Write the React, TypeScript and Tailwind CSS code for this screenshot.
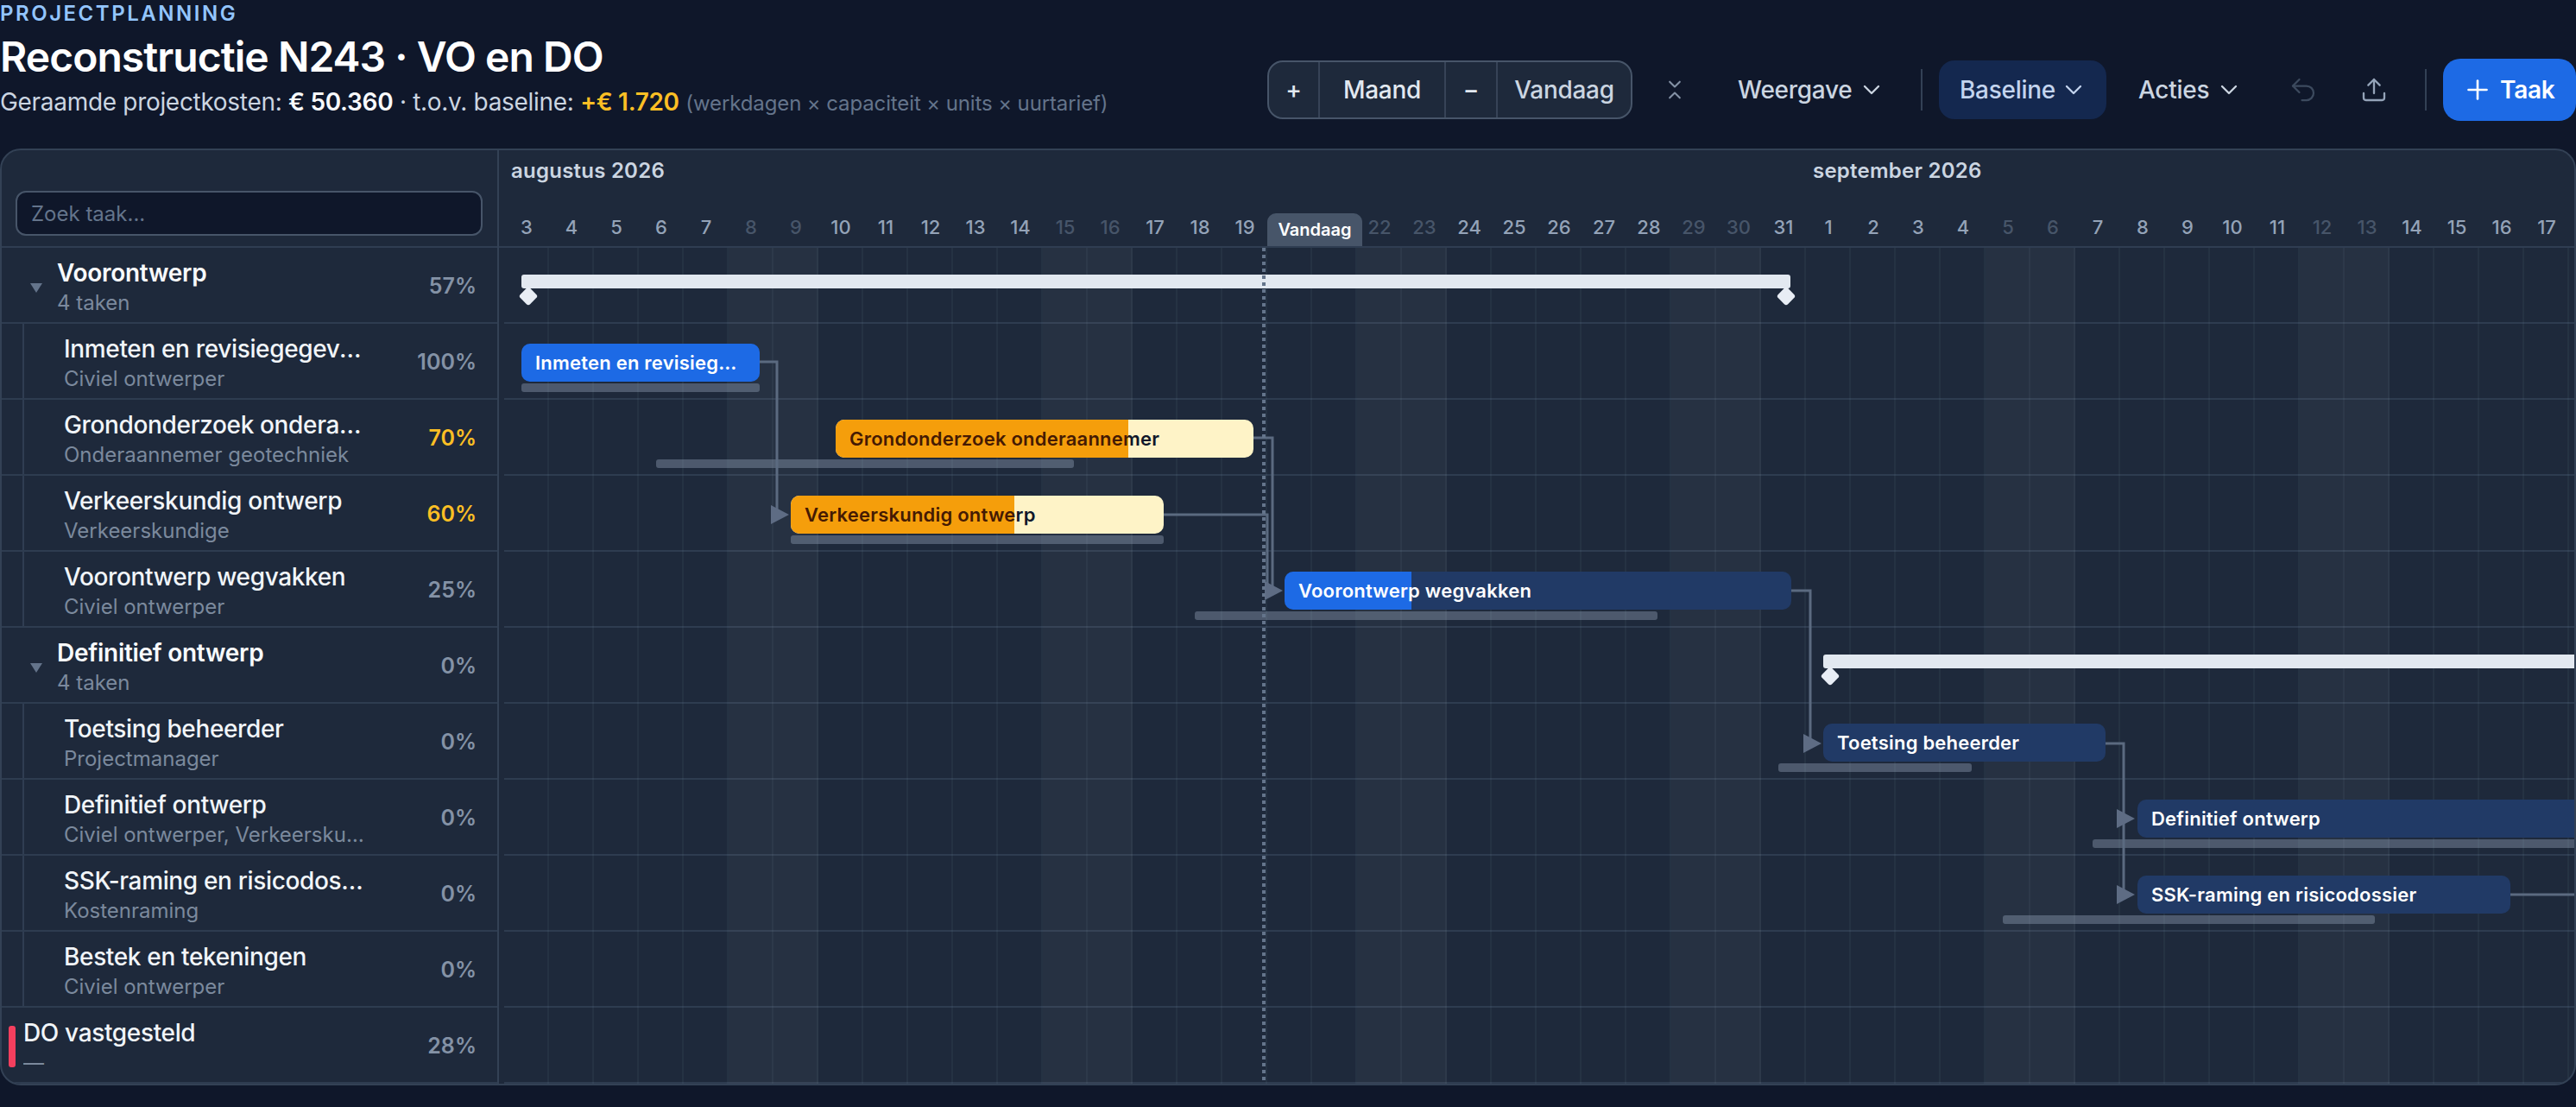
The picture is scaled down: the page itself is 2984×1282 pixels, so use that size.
import { ChevronDown, ChevronsDownUp, Plus, Undo2, Upload } from 'lucide-react';

// origin of the timeline canvas in the page
const OX = 584;
const OY = 287;

const augDays = Array.from({ length: 29 }, (_, i) => i + 3);
const sepDays = Array.from({ length: 18 }, (_, i) => i + 1);
const days = [...augDays, ...sepDays];
const isWeekend = (i: number) => i % 7 === 5 || i % 7 === 6;

const rows = [
  { type: 'group', name: 'Voorontwerp', sub: '4 taken', pct: '57%' },
  { type: 'task', name: 'Inmeten en revisiegegevens', sub: 'Civiel ontwerper', pct: '100%' },
  { type: 'task', name: 'Grondonderzoek onderaannemer', sub: 'Onderaannemer geotechniek', pct: '70%', warn: true },
  { type: 'task', name: 'Verkeerskundig ontwerp', sub: 'Verkeerskundige', pct: '60%', warn: true },
  { type: 'task', name: 'Voorontwerp wegvakken', sub: 'Civiel ontwerper', pct: '25%' },
  { type: 'group', name: 'Definitief ontwerp', sub: '4 taken', pct: '0%' },
  { type: 'task', name: 'Toetsing beheerder', sub: 'Projectmanager', pct: '0%' },
  { type: 'task', name: 'Definitief ontwerp', sub: 'Civiel ontwerper, Verkeerskundige', pct: '0%' },
  { type: 'task', name: 'SSK-raming en risicodossier', sub: 'Kostenraming', pct: '0%' },
  { type: 'task', name: 'Bestek en tekeningen', sub: 'Civiel ontwerper', pct: '0%' },
  { type: 'milestone', name: 'DO vastgesteld', sub: '—', pct: '28%' },
];

const bars = [
  { name: 'Inmeten en revisiegegevens', x1: 604, x2: 880, y: 398, pct: 100, amber: false },
  { name: 'Grondonderzoek onderaannemer', x1: 968, x2: 1452, y: 486, pct: 70, amber: true },
  { name: 'Verkeerskundig ontwerp', x1: 916, x2: 1348, y: 574, pct: 60, amber: true },
  { name: 'Voorontwerp wegvakken', x1: 1488, x2: 2075, y: 662, pct: 25, amber: false },
  { name: 'Toetsing beheerder', x1: 2112, x2: 2439, y: 838, pct: 0, amber: false },
  { name: 'Definitief ontwerp', x1: 2476, x2: 3100, y: 926, pct: 0, amber: false },
  { name: 'SSK-raming en risicodossier', x1: 2476, x2: 2908, y: 1014, pct: 0, amber: false },
];

const baselines = [
  { x1: 604, x2: 880, y: 444 },
  { x1: 760, x2: 1244, y: 532 },
  { x1: 916, x2: 1348, y: 620 },
  { x1: 1384, x2: 1920, y: 708 },
  { x1: 2060, x2: 2284, y: 884 },
  { x1: 2424, x2: 3100, y: 972 },
  { x1: 2320, x2: 2751, y: 1060 },
];

const summaries = [
  { x1: 604, x2: 2074, y: 318 },
  { x1: 2112, x2: 3100, y: 758 },
];

const diamonds = [
  { x: 612, y: 343 },
  { x: 2069, y: 343 },
  { x: 2120, y: 783 },
];

const links = [
  'M880 419H900V596',
  'M1452 507H1474V684',
  'M1348 596H1468V684',
  'M2075 684H2097V861',
  'M2439 861H2460V1036',
  'M2908 1036H2990',
];

const arrows = [
  { x: 893, y: 596 },
  { x: 1465, y: 684 },
  { x: 2089, y: 861 },
  { x: 2452, y: 948 },
  { x: 2452, y: 1036 },
];

function TaskBar({ bar }: { bar: (typeof bars)[number] }) {
  const width = bar.x2 - bar.x1;
  const labelCls = 'block truncate pr-[24px] pl-4 text-[22px] leading-[44px] font-semibold tracking-[0.01em]';
  return (
    <div
      className={`absolute h-[44px] overflow-hidden rounded-[10px] ${bar.amber ? 'bg-[#fef3c7] text-[#0f172a]' : 'bg-[#213a66] text-white'}`}
      style={{ left: bar.x1 - OX, top: bar.y - OY, width }}
    >
      <span className={labelCls}>{bar.name}</span>
      {bar.pct > 0 && (
        <div
          className={`absolute inset-y-0 left-0 overflow-hidden ${bar.amber ? 'bg-[#f59e0b] text-[#451a03]' : 'bg-[#1d6ae5] text-white'}`}
          style={{ width: (width * bar.pct) / 100 }}
        >
          <span className={labelCls} style={{ width }}>
            {bar.name}
          </span>
        </div>
      )}
    </div>
  );
}

function Row({ row }: { row: (typeof rows)[number] }) {
  const isGroup = row.type === 'group';
  const isTask = row.type === 'task';
  const isMilestone = row.type === 'milestone';
  return (
    <div className="relative flex h-[88px] items-center border-b-2 border-[#2e3c50]">
      {isTask && <div className="absolute inset-y-0 left-[24px] w-[2px] bg-[#2f3d52]" />}
      {isGroup && (
        <svg className="absolute top-[41px] left-[33px]" width="14" height="11" viewBox="0 0 14 11">
          <path d="M0 0H14L7 11Z" fill="#64748b" />
        </svg>
      )}
      {isMilestone && <div className="absolute top-[21px] left-[8px] h-[48px] w-[8px] rounded-[3px] bg-[#f43f5e]" />}
      <div className={`min-w-0 pt-[5px] ${isGroup ? 'ml-[64px] w-[400px]' : isTask ? 'ml-[72px] w-[352px]' : 'ml-[25px] w-[400px]'}`}>
        <div className={`truncate text-[28px] leading-[36px] ${isGroup ? 'tracking-[-0.01em] font-semibold text-[#f8fafc]' : 'tracking-[-0.0125em] font-medium text-[#f1f5f9]'}`}>
          {row.name}
        </div>
        <div className="truncate text-[24px] leading-[33px] text-[#7b899d]">{row.sub}</div>
      </div>
      <div className={`mr-[24px] ml-auto pt-[3px] text-[25px] font-semibold ${row.warn ? 'text-[#fbbf24]' : 'text-[#8492a6]'}`}>{row.pct}</div>
    </div>
  );
}

export default function App() {
  return (
    <div className="h-[1282px] w-[2984px] overflow-hidden bg-[#0f172a] font-['Inter',sans-serif]">
      {/* Header */}
      <header className="flex h-[172px] justify-between">
        <div className="pt-[1px]">
          <div className="text-[24px] leading-[30px] font-semibold tracking-[0.105em] text-[#93c5fd]">PROJECTPLANNING</div>
          <h1 className="mt-[7px] text-[48px] leading-[56px] font-semibold tracking-[-0.02em] text-white">Reconstructie N243 · VO en DO</h1>
          <p className="mt-[4px] text-[28px] leading-[40px] tracking-[-0.011em] text-[#cbd5e1]">
            Geraamde projectkosten: <span className="font-semibold text-[#f8fafc]">€ 50.360</span> · t.o.v. baseline:{' '}
            <span className="font-semibold text-[#fbbf24]">+€ 1.720</span>{' '}
            <span className="text-[24px] tracking-[-0.005em] text-[#64748b]">(werkdagen × capaciteit × units × uurtarief)</span>
          </p>
        </div>

        <div className="flex items-start pt-[68px] text-[28px] font-medium tracking-[-0.01em]">
          <div className="mt-[2px] flex h-[68px] w-[423px] overflow-hidden rounded-[18px] border-2 border-[#475569] bg-[#1e293b] text-[#e2e8f0]">
            <button className="w-[59px] border-r-2 border-[#374357]">+</button>
            <button className="w-[146px] border-r-2 border-[#374357]">Maand</button>
            <button className="w-[60px] border-r-2 border-[#374357]">−</button>
            <button className="flex-1 text-[#cbd5e1]">Vandaag</button>
          </div>
          <button className="mt-[2px] ml-[21px] flex h-[68px] w-[56px] items-center justify-center text-[#8492a6]">
            <ChevronsDownUp size={28} strokeWidth={1.75} />
          </button>
          <button className="mt-[2px] ml-[21px] flex h-[68px] w-[217px] items-center gap-[7px] pl-[24px] text-[#cbd5e1]">
            Weergave <ChevronDown size={32} strokeWidth={1.75} />
          </button>
          <div className="mt-[12px] ml-[19px] h-[48px] w-[2px] bg-[#334155]" />
          <button className="mt-[2px] ml-[19px] flex h-[68px] w-[194px] items-center gap-[5px] rounded-[18px] bg-[#14284f] pl-[24px] text-[#c3d4ee]">
            Baseline <ChevronDown size={32} strokeWidth={1.75} />
          </button>
          <button className="mt-[2px] ml-[13px] flex h-[68px] w-[169px] items-center gap-[7px] pl-[24px] text-[#cbd5e1]">
            Acties <ChevronDown size={32} strokeWidth={1.75} />
          </button>
          <button className="mt-[2px] ml-[18px] flex h-[68px] w-[56px] items-center justify-center text-[#3c4a5e]">
            <Undo2 size={36} strokeWidth={1.5} />
          </button>
          <button className="mt-[2px] ml-[26px] flex h-[68px] w-[56px] items-center justify-center text-[#94a3b8]">
            <Upload size={32} strokeWidth={1.75} />
          </button>
          <div className="mt-[12px] ml-[31px] h-[48px] w-[2px] bg-[#334155]" />
          <button className="ml-[19px] flex h-[72px] w-[154px] items-center gap-[8px] rounded-[20px] bg-[#1d6ae5] pl-[22px] font-semibold text-white">
            <Plus size={36} strokeWidth={1.75} /> Taak
          </button>
        </div>
      </header>

      {/* Gantt panel */}
      <div className="flex h-[1085px] overflow-hidden rounded-[24px] border-2 border-[#334155] bg-[#1e293b]">
        {/* Task list */}
        <div className="w-[576px] shrink-0 border-r-2 border-[#334155]">
          <div className="flex h-[113px] items-end border-b-2 border-[#2f3d52] px-[16px] pb-[12px]">
            <input
              placeholder="Zoek taak..."
              className="h-[52px] w-[541px] rounded-[12px] border-2 border-[#475569] bg-[#0f172a] px-[16px] text-[24px] outline-none placeholder:text-[#64748b]"
            />
          </div>
          {rows.map((row) => (
            <Row key={row.name + row.type} row={row} />
          ))}
        </div>

        {/* Timeline */}
        <div className="min-w-0 flex-1 overflow-hidden">
          <div className="h-[113px] border-b-2 border-[#2f3d52] pl-[6px]">
            <div className="flex h-[48px] items-center text-[24px] font-semibold tracking-[0.01em] text-[#cbd5e1]">
              <div className="w-[1508px] shrink-0 pl-[8px]">augustus 2026</div>
              <div className="shrink-0 pl-[8px] whitespace-nowrap">september 2026</div>
            </div>
            <div className="flex h-[63px] items-end pb-[10px] text-[22px] leading-[24px] font-medium">
              {days.map((d, i) => {
                if (i === 17) {
                  return (
                    <div key={i} className="relative w-[104px] shrink-0">
                      <div className="absolute -bottom-[10px] left-0 flex h-[38px] w-[110px] items-center justify-center rounded-t-[10px] bg-[#475569] text-[20px] font-semibold text-white">
                        Vandaag
                      </div>
                    </div>
                  );
                }
                if (i === 18) return null;
                return (
                  <div key={i} className={`w-[52px] shrink-0 text-center ${isWeekend(i) ? 'text-[#475569]' : 'text-[#94a3b8]'}`}>
                    {d}
                  </div>
                );
              })}
            </div>
          </div>

          <div className="relative h-[968px] pl-[6px]">
            {/* Grid rows */}
            {rows.map((row) => (
              <div key={row.name + row.type} className="h-[88px] border-b-2 border-[#2e3c50]" />
            ))}
            {/* Day columns */}
            <div className="absolute inset-y-0 left-[6px] flex">
              {days.map((d, i) => (
                <div
                  key={i}
                  className={`w-[52px] shrink-0 border-r-2 border-[#94a3b8]/[0.07] ${isWeekend(i) ? 'bg-white/[0.04]' : ''}`}
                />
              ))}
            </div>

            {/* Canvas of the bars: its origin is the first day column */}
            <div className="absolute inset-0 left-[6px]">
              {baselines.map((b, i) => (
                <div
                  key={i}
                  className="absolute h-[10px] rounded-[3px] bg-[#94a3b8]/40"
                  style={{ left: b.x1 - OX, top: b.y - OY, width: b.x2 - b.x1 }}
                />
              ))}
              {summaries.map((s, i) => (
                <div
                  key={i}
                  className="absolute h-[16px] rounded-[3px] bg-[#e2e8f0]"
                  style={{ left: s.x1 - OX, top: s.y - OY, width: s.x2 - s.x1 }}
                />
              ))}
              {diamonds.map((m, i) => (
                <div
                  key={i}
                  className="absolute h-[16px] w-[16px] -translate-x-1/2 -translate-y-1/2 rotate-45 rounded-[3px] bg-[#e8edf5]"
                  style={{ left: m.x - OX, top: m.y - OY }}
                />
              ))}
              {bars.map((bar) => (
                <TaskBar key={bar.name} bar={bar} />
              ))}
              <svg className="pointer-events-none absolute inset-0 h-full w-full overflow-hidden">
                <g transform={`translate(${-OX},${-OY})`}>
                  {links.map((d) => (
                    <path key={d} d={d} fill="none" stroke="#5b6a80" strokeWidth="3" />
                  ))}
                  {arrows.map((a, i) => (
                    <path key={i} d={`M${a.x} ${a.y - 11}L${a.x + 21} ${a.y}L${a.x} ${a.y + 11}Z`} fill="#5e6c84" />
                  ))}
                </g>
              </svg>
              {/* Today line */}
              <div
                className="absolute inset-y-0 w-[4px] bg-[repeating-linear-gradient(to_bottom,#64748b_0,#64748b_4px,transparent_4px,transparent_8px)]"
                style={{ left: 1462 - OX }}
              />
            </div>
          </div>
        </div>
      </div>
    </div>
  );
}
